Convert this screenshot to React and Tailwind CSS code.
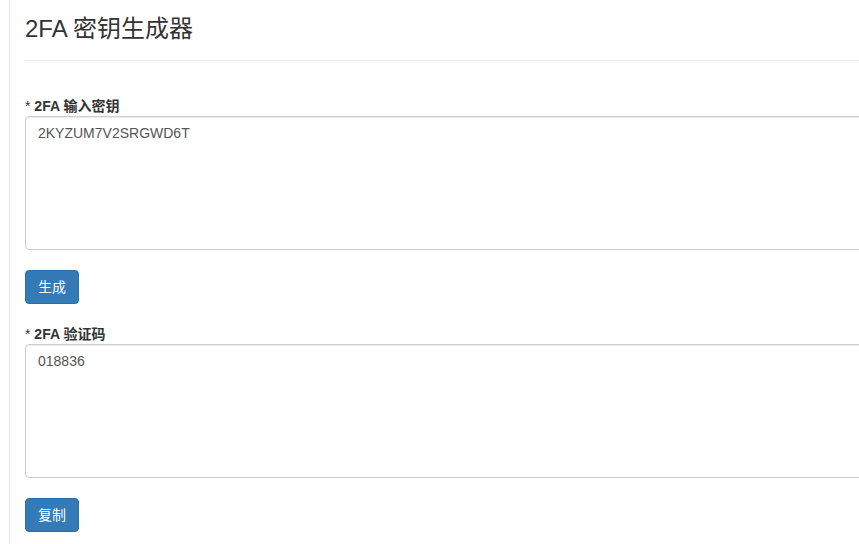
import React from 'react';

const font = { fontFamily: '"Liberation Sans", Arial, "Noto Sans CJK SC", sans-serif' };

const Field = ({ label, value }) => (
  <div>
    <label className="block h-5 text-[14px] leading-5 font-bold text-[#333]">
      <span className="font-normal">*</span> 2FA {label}
    </label>
    <textarea
      readOnly
      defaultValue={value}
      className="block w-[900px] h-[134px] resize-none rounded-[4px] border border-[#ccc] bg-white px-3 py-1.5 text-[14px] leading-5 text-[#555] shadow-[inset_0_1px_1px_rgba(0,0,0,0.075)] outline-none"
    />
  </div>
);

const Button = ({ children }) => (
  <button className="mt-5 h-[34px] rounded-[4px] border border-[#2e6da4] bg-[#337ab7] px-3 text-[14px] leading-5 text-white">
    {children}
  </button>
);

export default function App() {
  return (
    <div className="flex min-h-screen w-screen overflow-hidden bg-white" style={font}>
      <div className="w-[9px] shrink-0" />
      <div className="flex-1 border-l border-[#e7e7e7] pl-[15px]">
        <div className="border-b border-[#eee] pt-4 pb-[18px]">
          <h1 className="text-[24px] leading-[26px] font-normal text-[#333]">2FA 密钥生成器</h1>
        </div>
        <div className="flex flex-col items-start pt-[35px]">
          <Field label="输入密钥" value="2KYZUM7V2SRGWD6T" />
          <Button>生成</Button>
          <div className="mt-5">
            <Field label="验证码" value="018836" />
          </div>
          <Button>复制</Button>
        </div>
      </div>
    </div>
  );
}
